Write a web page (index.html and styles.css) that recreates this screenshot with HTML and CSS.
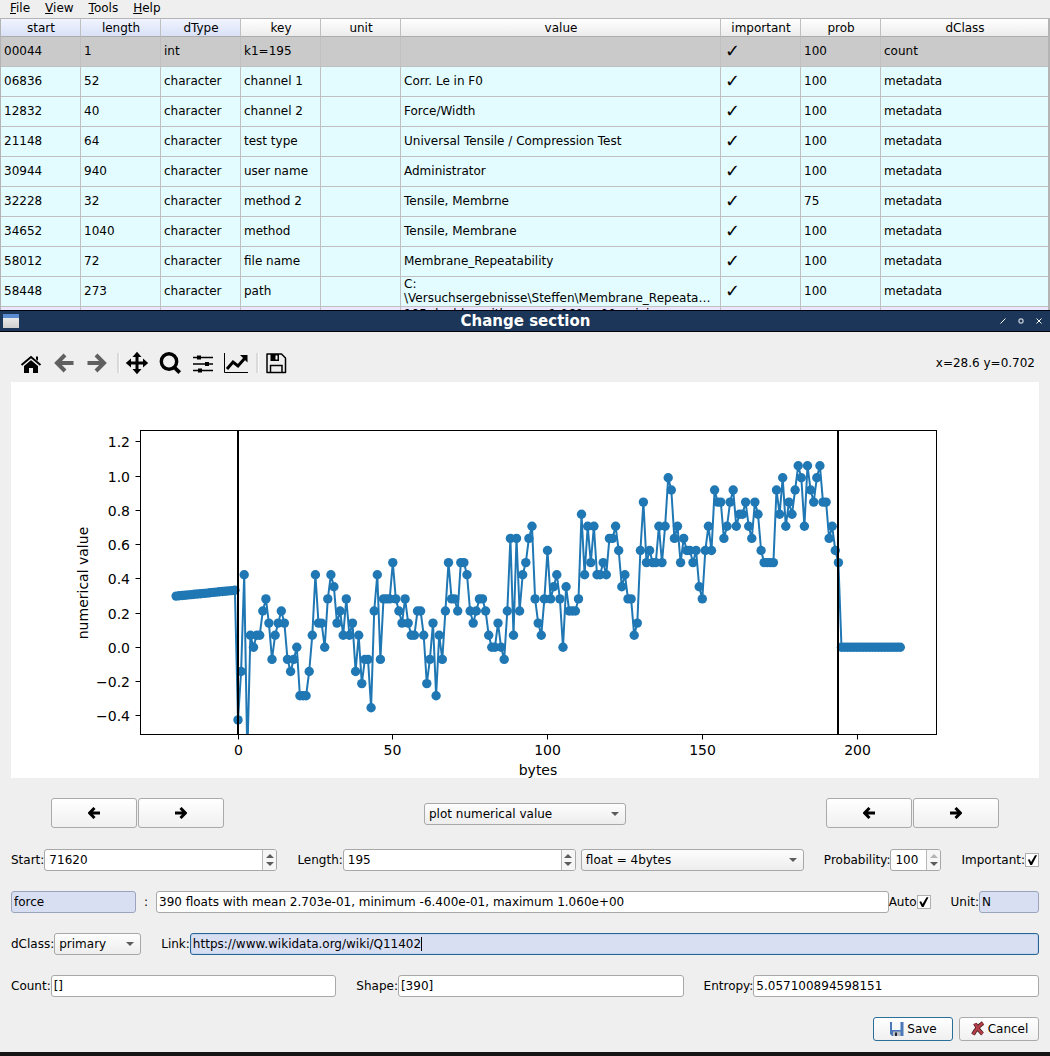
FILE: index.html
```html
<!DOCTYPE html>
<html lang="en">
<head>
<meta charset="utf-8">
<title>Change section</title>
<link rel="stylesheet" href="styles.css">
</head>
<body>
<main class="app">
  <nav class="menu">
    <a href="#file"><u>F</u>ile</a>
    <a href="#view"><u>V</u>iew</a>
    <a href="#tools"><u>T</u>ools</a>
    <a href="#help"><u>H</u>elp</a>
  </nav>
  <div class="sections">
    <table class="grid">
      <colgroup>
        <col class="c-first"><col class="c"><col class="c"><col class="c"><col class="c"><col class="c-value"><col class="c"><col class="c"><col>
      </colgroup>
      <thead>
        <tr><th class="sel">start</th><th class="sel">length</th><th class="sel">dType</th><th>key</th><th>unit</th><th>value</th><th>important</th><th>prob</th><th>dClass</th></tr>
      </thead>
      <tbody>
        <tr class="count"><td>00044</td><td>1</td><td>int</td><td>k1=195</td><td></td><td></td><td class="tick">✓</td><td>100</td><td>count</td></tr>
        <tr><td>06836</td><td>52</td><td>character</td><td>channel 1</td><td></td><td>Corr. Le in F0</td><td class="tick">✓</td><td>100</td><td>metadata</td></tr>
        <tr><td>12832</td><td>40</td><td>character</td><td>channel 2</td><td></td><td>Force/Width</td><td class="tick">✓</td><td>100</td><td>metadata</td></tr>
        <tr><td>21148</td><td>64</td><td>character</td><td>test type</td><td></td><td>Universal Tensile / Compression Test</td><td class="tick">✓</td><td>100</td><td>metadata</td></tr>
        <tr><td>30944</td><td>940</td><td>character</td><td>user name</td><td></td><td>Administrator</td><td class="tick">✓</td><td>100</td><td>metadata</td></tr>
        <tr><td>32228</td><td>32</td><td>character</td><td>method 2</td><td></td><td>Tensile, Membrne</td><td class="tick">✓</td><td>75</td><td>metadata</td></tr>
        <tr><td>34652</td><td>1040</td><td>character</td><td>method</td><td></td><td>Tensile, Membrane</td><td class="tick">✓</td><td>100</td><td>metadata</td></tr>
        <tr><td>58012</td><td>72</td><td>character</td><td>file name</td><td></td><td>Membrane_Repeatability</td><td class="tick">✓</td><td>100</td><td>metadata</td></tr>
        <tr><td>58448</td><td>273</td><td>character</td><td>path</td><td></td><td class="two">C:<br>\Versuchsergebnisse\Steffen\Membrane_Repeata…</td><td class="tick">✓</td><td>100</td><td>metadata</td></tr>
        <tr class="primary"><td></td><td></td><td></td><td></td><td></td><td class="two">195 doubles with mean 1.060e+00, mini<br>&nbsp;</td><td></td><td></td><td></td></tr>
      </tbody>
    </table>
  </div>
</main>

<section class="dialog" aria-labelledby="dialog-title">
  <header class="titlebar">
    <svg class="wicon" viewBox="0 0 16 14" width="16" height="14"><defs><linearGradient id="wg" x2="0" y2="1"><stop offset="0" stop-color="#f4f4f4"/><stop offset="1" stop-color="#cfcfcf"/></linearGradient></defs><rect width="16" height="14" fill="url(#wg)"/><rect width="16" height="4" fill="#5b8bd0"/></svg>
    <h1 id="dialog-title">Change section</h1>
    <div class="wbuttons">
      <button aria-label="Minimize"><svg viewBox="0 0 6 6" width="6" height="6"><path d="M.5 5.5l5-5"/></svg></button>
      <button aria-label="Maximize"><svg viewBox="0 0 6 6" width="6" height="6"><rect x="1" y="1" width="4" height="4" rx="1"/></svg></button>
      <button aria-label="Close"><svg viewBox="0 0 6 6" width="6" height="6"><path d="M.5.5l5 5M.5 5.5l5-5"/></svg></button>
    </div>
  </header>

  <div class="toolbar">
    <button aria-label="Home"><svg viewBox="0 0 24 24" width="24" height="24"><path d="M5 14.500l7-6 7 6V22h-5v-5h-4v5H5z"/><path d="M17 5.500h2v5h-2z"/><path d="M2.500 14.500L12 6.500l9.500 8" fill="none" stroke="#efefef" stroke-width="4"/><path d="M2.500 14L12 6l9.500 8" fill="none" stroke="#000" stroke-width="2"/></svg></button>
    <button aria-label="Back" class="off"><svg viewBox="0 0 24 24" width="24" height="24"><path d="M5 12H21.500M13 4l-8 8 8 8" fill="none" stroke="#606060" stroke-width="4"/></svg></button>
    <button aria-label="Forward" class="off"><svg viewBox="0 0 24 24" width="24" height="24"><path d="M2.500 12H19M11 4l8 8-8 8" fill="none" stroke="#606060" stroke-width="4"/></svg></button>
    <span class="sep"></span>
    <button aria-label="Pan"><svg viewBox="0 0 24 24" width="24" height="24"><path d="M3 12h18M12 3v18" stroke="#000" stroke-width="3"/><path d="M12 .8L16.500 6h-9zM12 23.200L7.500 18h9zM.8 12L6 7.500v9zM23.200 12L18 16.500v-9z"/></svg></button>
    <button aria-label="Zoom"><svg viewBox="0 0 24 24" width="24" height="24"><circle cx="11" cy="10.500" r="7.700" fill="none" stroke="#000" stroke-width="3.400"/><path d="M16.500 16.500l5.200 5.200" stroke="#000" stroke-width="3.800"/></svg></button>
    <button aria-label="Configure subplots"><svg viewBox="0 0 24 24" width="24" height="24"><path d="M2 6.500h20M2 13h20M2 19.500h20" stroke="#000" stroke-width="1.500"/><path d="M6 4.500h4v4H6zM14 11h4v4h-4zM7 17.500h4v4H7z"/></svg></button>
    <button aria-label="Edit axes"><svg viewBox="0 0 24 24" width="24" height="24"><path d="M.5 2v19.500H24" fill="none" stroke="#000"/><path d="M3 18l6-7 5 4 7-8" fill="none" stroke="#000" stroke-width="3"/><path d="M16 4h7.500v7.500z"/></svg></button>
    <span class="sep"></span>
    <button aria-label="Save figure"><svg viewBox="0 0 24 24" width="24" height="24"><path d="M3 3h14.500L21.500 7v14.500H3z" fill="none" stroke="#000" stroke-width="1.500" stroke-linejoin="round"/><path d="M6.500 3h8.500v7H6.500z"/><path d="M11.500 4.500h2v4h-2z" fill="#fff"/><path d="M6.500 21v-6.500h11.500V21" fill="none" stroke="#000" stroke-width="1.500"/></svg></button>
    <output class="coords">x=28.6 y=0.702</output>
  </div>

  <figure class="plot">
    <svg id="chart" viewBox="11 382 1028 396" role="img" aria-label="numerical value over bytes"></svg>
  </figure>

  <form class="fields">
    <div class="row nav">
      <div class="pair">
        <button type="button" class="btn" aria-label="Start back"><svg viewBox="0 0 12 12" width="12" height="12"><path d="M1.500 6H12M6.500 1L1.500 6l5 5"/></svg></button>
        <button type="button" class="btn" aria-label="Start forward"><svg viewBox="0 0 12 12" width="12" height="12"><path d="M0 6h10.500M5.500 1l5 5-5 5"/></svg></button>
      </div>
      <span class="combo plotkind"><select aria-label="Plot kind"><option>plot numerical value</option></select></span>
      <div class="pair">
        <button type="button" class="btn" aria-label="End back"><svg viewBox="0 0 12 12" width="12" height="12"><path d="M1.500 6H12M6.500 1L1.500 6l5 5"/></svg></button>
        <button type="button" class="btn" aria-label="End forward"><svg viewBox="0 0 12 12" width="12" height="12"><path d="M0 6h10.500M5.500 1l5 5-5 5"/></svg></button>
      </div>
    </div>

    <div class="row">
      <div class="field grow"><label for="start">Start:</label><span class="spin"><input id="start" type="number" value="71620"><i class="arrows"></i></span></div>
      <div class="field grow"><label for="length">Length:</label><span class="spin"><input id="length" type="number" value="195"><i class="arrows"></i></span></div>
      <span class="combo dtype"><select aria-label="Data type"><option>float = 4bytes</option></select></span>
      <div class="field"><label for="prob">Probability:</label><span class="spin small"><input id="prob" type="number" max="100" value="100"><i class="arrows max"></i></span></div>
      <div class="field"><label for="important">Important:</label><input id="important" type="checkbox" checked></div>
    </div>

    <div class="row tight">
      <input class="line tinted key" type="text" aria-label="Key" value="force">
      <span class="colon">:</span>
      <input class="line" type="text" aria-label="Value" value="390 floats with mean 2.703e-01, minimum -6.400e-01, maximum 1.060e+00">
      <div class="field auto"><label for="auto">Auto</label><input id="auto" type="checkbox" checked></div>
      <div class="field"><label for="unit">Unit:</label><input id="unit" class="line tinted unit" type="text" value="N"></div>
    </div>

    <div class="row">
      <div class="field"><label for="dclass">dClass:</label><span class="combo dclass"><select id="dclass"><option>primary</option></select></span></div>
      <div class="field grow"><label for="link">Link:</label><span class="editing"><input id="link" class="line tinted active" type="text" value="https://www.wikidata.org/wiki/Q11402"><i class="caret"></i></span></div>
    </div>

    <div class="row thirds">
      <div class="field"><label for="count">Count:</label><input id="count" class="line" type="text" value="[]"></div>
      <div class="field"><label for="shape">Shape:</label><input id="shape" class="line" type="text" value="[390]"></div>
      <div class="field"><label for="entropy">Entropy:</label><input id="entropy" class="line" type="text" value="5.057100894598151"></div>
    </div>

    <div class="actions">
      <button type="button" class="btn default"><svg viewBox="0 0 16 16" width="16" height="16"><path d="M1 1h13.500v14H3l-2-2z" fill="#4a78b8"/><path d="M3 1h8.500v8H3z" fill="#f6f8fb"/><path d="M4 10.500h7.500V15H4z" fill="#b9bfc6"/><path d="M6 11.500h2V15H6z" fill="#223"/></svg>Save</button>
      <button type="button" class="btn"><svg viewBox="0 0 16 16" width="16" height="16"><path d="M5 2.500c1.200 2.500 3.500 7 7.500 10.500M13 2C8.500 5 5.500 9 3 13.500" fill="none" stroke="#4a2020" stroke-width="4"/><path d="M5 2.500c1.200 2.500 3.500 7 7.500 10.500M13 2C8.500 5 5.500 9 3 13.500" fill="none" stroke="#b5404a" stroke-width="2.500"/></svg>Cancel</button>
    </div>
  </form>
</section>
<script src="chart.js"></script>
</body>
</html>
```

FILE: styles.css
```css
* { box-sizing: border-box; }
body {
  margin: 0;
  height: 100vh;
  display: flex;
  flex-direction: column;
  overflow: hidden;
  background: #efefef;
  color: #000;
  font: 12px/14px "DejaVu Sans", sans-serif;
}
button, input, select { font: inherit; color: inherit; margin: 0; }

/* main window */
.app { flex: 1; min-height: 0; overflow: hidden; }
.menu { display: flex; gap: 15px; height: 18px; padding: 1px 10px 0; }
.menu a { color: #000; text-decoration: none; }
.sections { border: 1px solid #b4b4b4; border-width: 1px 2px 0 1px; }
.grid { width: 100%; table-layout: fixed; border-spacing: 0; background: #e3fcff; }
.c, .c-first { width: 80px; }
.c-value { width: 320px; }
.grid th {
  height: 18px;
  padding: 0 0 0 1px;
  font-weight: normal;
  background: linear-gradient(#fff, #ececec);
  border-right: 1px solid #c0c0c0;
  border-bottom: 1px solid #acacac;
}
.grid th.sel { background: linear-gradient(#f1f4ff, #d9e1f7); }
.grid td {
  height: 30px;
  padding: 0 0 2px 3px;
  white-space: nowrap;
  border-right: 1px solid #c0c0c0;
  border-bottom: 1px solid #c0c0c0;
}
.grid th:last-child, .grid td:last-child { border-right: 0; }
.grid td.two { padding-bottom: 1px; }
.grid td.tick { padding-left: 4px; font-size: 18px; }
.grid .count { background: #cacaca; }
.grid .primary { background: #ebe6ff; }

/* dialog */
.dialog { flex: none; border-bottom: 4px solid #151515; background: #efefef; }
.titlebar {
  display: flex;
  align-items: center;
  justify-content: space-between;
  height: 22px;
  padding: 0 8px 0 3px;
  background: #1b3659;
  border: 1px solid #02050f;
  border-width: 1px 0;
}
.titlebar h1 { margin: 0; padding-left: 32px; color: #fff; font-size: 15px; line-height: 18px; }
.wbuttons { display: flex; gap: 12px; }
.wbuttons button { display: flex; padding: 0; border: 0; background: none; }
.wbuttons svg { fill: none; stroke: #fff; }

.toolbar { display: flex; align-items: center; height: 50px; padding: 12px 15px 0 14px; }
.toolbar button { display: flex; justify-content: center; width: 33px; padding: 0; border: 0; background: none; }
.sep { width: 7px; height: 20px; padding-left: 4px; }
.sep::before { content: ""; display: block; width: 2px; height: 20px; background: #dadada; border-right: 1px solid #fafafa; }
.coords { margin-left: auto; }

.plot { margin: 0 11px; background: #fff; }
.plot svg { display: block; width: 100%; height: auto; }
.plot text { font-size: 14px; text-anchor: middle; }
.plot text.y { text-anchor: end; }
.axis { fill: none; stroke: #000; }
.bound { stroke: #000; stroke-width: 2; }
.series { fill: none; stroke: #1f77b4; stroke-width: 2; stroke-linejoin: round; }
.dots { fill: #1f77b4; }

/* form */
.fields { display: flex; flex-direction: column; gap: 20px; padding: 20px 11px 11px; }
.row { display: flex; align-items: center; gap: 20px; height: 22px; }
.row.nav { align-items: flex-start; justify-content: space-between; height: 31px; padding: 0 40px; }
.row.tight { gap: 0; }
.pair { display: flex; gap: 1px; }
.pair .btn { width: 86px; height: 30px; }
.pair svg { fill: none; stroke: #000; stroke-width: 3; }
.field { display: flex; align-items: center; }
.field.grow { flex: 1 1 auto; }
.thirds .field { flex: 1 1 auto; }
.thirds .line { flex: 1 1 200px; }

.btn {
  display: flex;
  align-items: center;
  justify-content: center;
  gap: 2px;
  padding: 0;
  border: 1px solid #aaa;
  border-radius: 3px;
  background: linear-gradient(#fff, #f0f0f0);
}
.line {
  flex: 1;
  min-width: 0;
  height: 22px;
  padding: 0 2px;
  border: 1px solid #a8a8a8;
  border-radius: 3px;
  background: #fff;
}
.tinted { background: #d8dff3; border-color: #9aa4bd; }
.active { border-color: #2a6496; box-shadow: inset 0 0 0 1px #c0d5ee; outline: 0; }
.key { flex: none; width: 125px; }
.unit { flex: none; width: 60px; }
.colon { width: 20px; padding-left: 8px; }
.auto { margin-right: 20px; }
.editing { position: relative; display: flex; flex: 1; }
.caret { position: absolute; left: 231px; top: 4px; width: 1px; height: 14px; background: #000; }

.spin {
  display: flex;
  flex: 1 1 200px;
  height: 22px;
  border: 1px solid #a8a8a8;
  border-radius: 3px;
  background: #fff;
  overflow: hidden;
}
.spin input { flex: 1; width: 0; min-width: 0; padding: 0 4px; border: 0; background: none; appearance: textfield; }
.spin input::-webkit-inner-spin-button { appearance: none; margin: 0; }
.spin.small { flex: none; width: 51px; }
.arrows {
  display: flex;
  flex-direction: column;
  align-items: center;
  justify-content: center;
  gap: 4px;
  width: 14px;
  border-left: 1px solid #b8b8b8;
  background: #f6f6f6;
}
.arrows::before, .arrows::after { content: ""; border: 4px solid transparent; }
.arrows::before { border-top: 0; border-bottom-color: #5c5c5c; }
.arrows::after { border-bottom: 0; border-top-color: #5c5c5c; }
.arrows.max::before { border-bottom-color: #b4b4b4; }

.combo { position: relative; display: flex; }
.plotkind { align-self: center; }
.combo select {
  width: 100%;
  height: 22px;
  padding: 0 20px 0 4px;
  border: 1px solid #a8a8a8;
  border-radius: 3px;
  background: linear-gradient(#fdfdfd, #ededed);
  appearance: none;
}
.combo::after { content: ""; position: absolute; right: 7px; top: 9px; border: 4px solid transparent; border-bottom: 0; border-top-color: #5c5c5c; pointer-events: none; }
.plotkind { width: 202px; }
.dtype { width: 223px; margin-left: -15px; }
.dclass { width: 87px; }

input[type="checkbox"] { width: 14px; height: 14px; border: 1px solid #b0b0b0; background: #fff; appearance: none; }
input[type="checkbox"]:checked::before {
  content: "";
  display: block;
  width: 12px;
  height: 12px;
  background: #000;
  clip-path: polygon(15% 48%, 30% 44%, 42% 66%, 75% 10%, 92% 10%, 50% 92%, 36% 92%);
}
.actions { display: flex; justify-content: flex-end; gap: 6px; }
.actions .btn { width: 80px; height: 24px; }
.actions .default { border-color: #2a6f98; }
```

FILE: chart.js
```js
// Samples of the section, in steps of 0.0707.
const levels = [
  -6,-2,6,-9,1,0,1,1,3,4,2,-1,1,2,3,2,-1,-2,-1,0,-4,-4,-4,-2,1,6,2,2,0,4,
  6,5,2,3,1,4,1,2,-2,1,-3,-1,-1,-5,3,6,-1,4,4,4,7,4,3,2,4,2,1,1,3,3,
  1,-3,-1,2,-4,1,-1,3,7,4,4,3,7,7,6,3,2,3,4,4,3,1,0,0,2,0,-1,3,9,1,
  9,3,6,7,9,10,4,2,1,4,8,4,5,6,4,0,5,3,3,3,4,11,6,10,7,10,6,6,7,6,
  9,9,10,8,5,6,4,4,1,2,8,12,7,8,7,7,10,7,10,14,13,9,10,7,9,8,8,7,8,5,
  4,8,10,8,13,12,12,9,10,12,13,10,11,11,12,10,9,12,11,8,7,7,7,7,13,11,14,10,12,11,
  13,15,14,10,15,13,12,14,15,12,12,9,10,8,7
];
const data = [];
for (let i = -20; i < 0; i++) data.push([i, 0.333 + (i + 1) * 0.0018]);
levels.forEach((k, i) => data.push([i, k * 0.0707]));
for (let i = 195; i <= 214; i++) data.push([i, 0]);

const left = 140.5, right = 936.5, top_ = 430.5, bottom = 734.5;
const X = v => 238 + v * 3.095;
const Y = v => 647.3 - v * 171.2;
let out = `<defs><clipPath id="area"><rect x="${left}" y="${top_}" width="${right - left}" height="${bottom - top_}"/></clipPath></defs>`;

out += '<g clip-path="url(#area)"><polyline class="series" points="' +
  data.map(([x, y]) => X(x).toFixed(1) + ',' + Y(y).toFixed(1)).join(' ') + '"/><g class="dots">' +
  data.map(([x, y]) => `<circle cx="${X(x).toFixed(1)}" cy="${Y(y).toFixed(1)}" r="4.700"/>`).join('') + '</g>';
out += [0, 194].map(v => `<path class="bound" d="M${Math.round(X(v))} ${top_}V${bottom}"/>`).join('') + '</g>';

out += `<rect class="axis" x="${left}" y="${top_}" width="${right - left}" height="${bottom - top_}"/>`;
for (const v of [0, 50, 100, 150, 200]) {
  const x = Math.floor(X(v)) + 0.5;
  out += `<path class="axis" d="M${x} ${bottom}v5"/><text x="${x}" y="755">${v}</text>`;
}
for (const v of [-0.4, -0.2, 0, 0.2, 0.4, 0.6, 0.8, 1, 1.2]) {
  const y = Math.floor(Y(v)) + 0.5;
  out += `<path class="axis" d="M${left} ${y}h-5"/><text class="y" x="130" y="${y + 5}">${v.toFixed(1).replace('-', '\u2212')}</text>`;
}
out += '<text x="538" y="775">bytes</text><text transform="translate(88 583) rotate(-90)">numerical value</text>';
document.getElementById('chart').innerHTML = out;
```
